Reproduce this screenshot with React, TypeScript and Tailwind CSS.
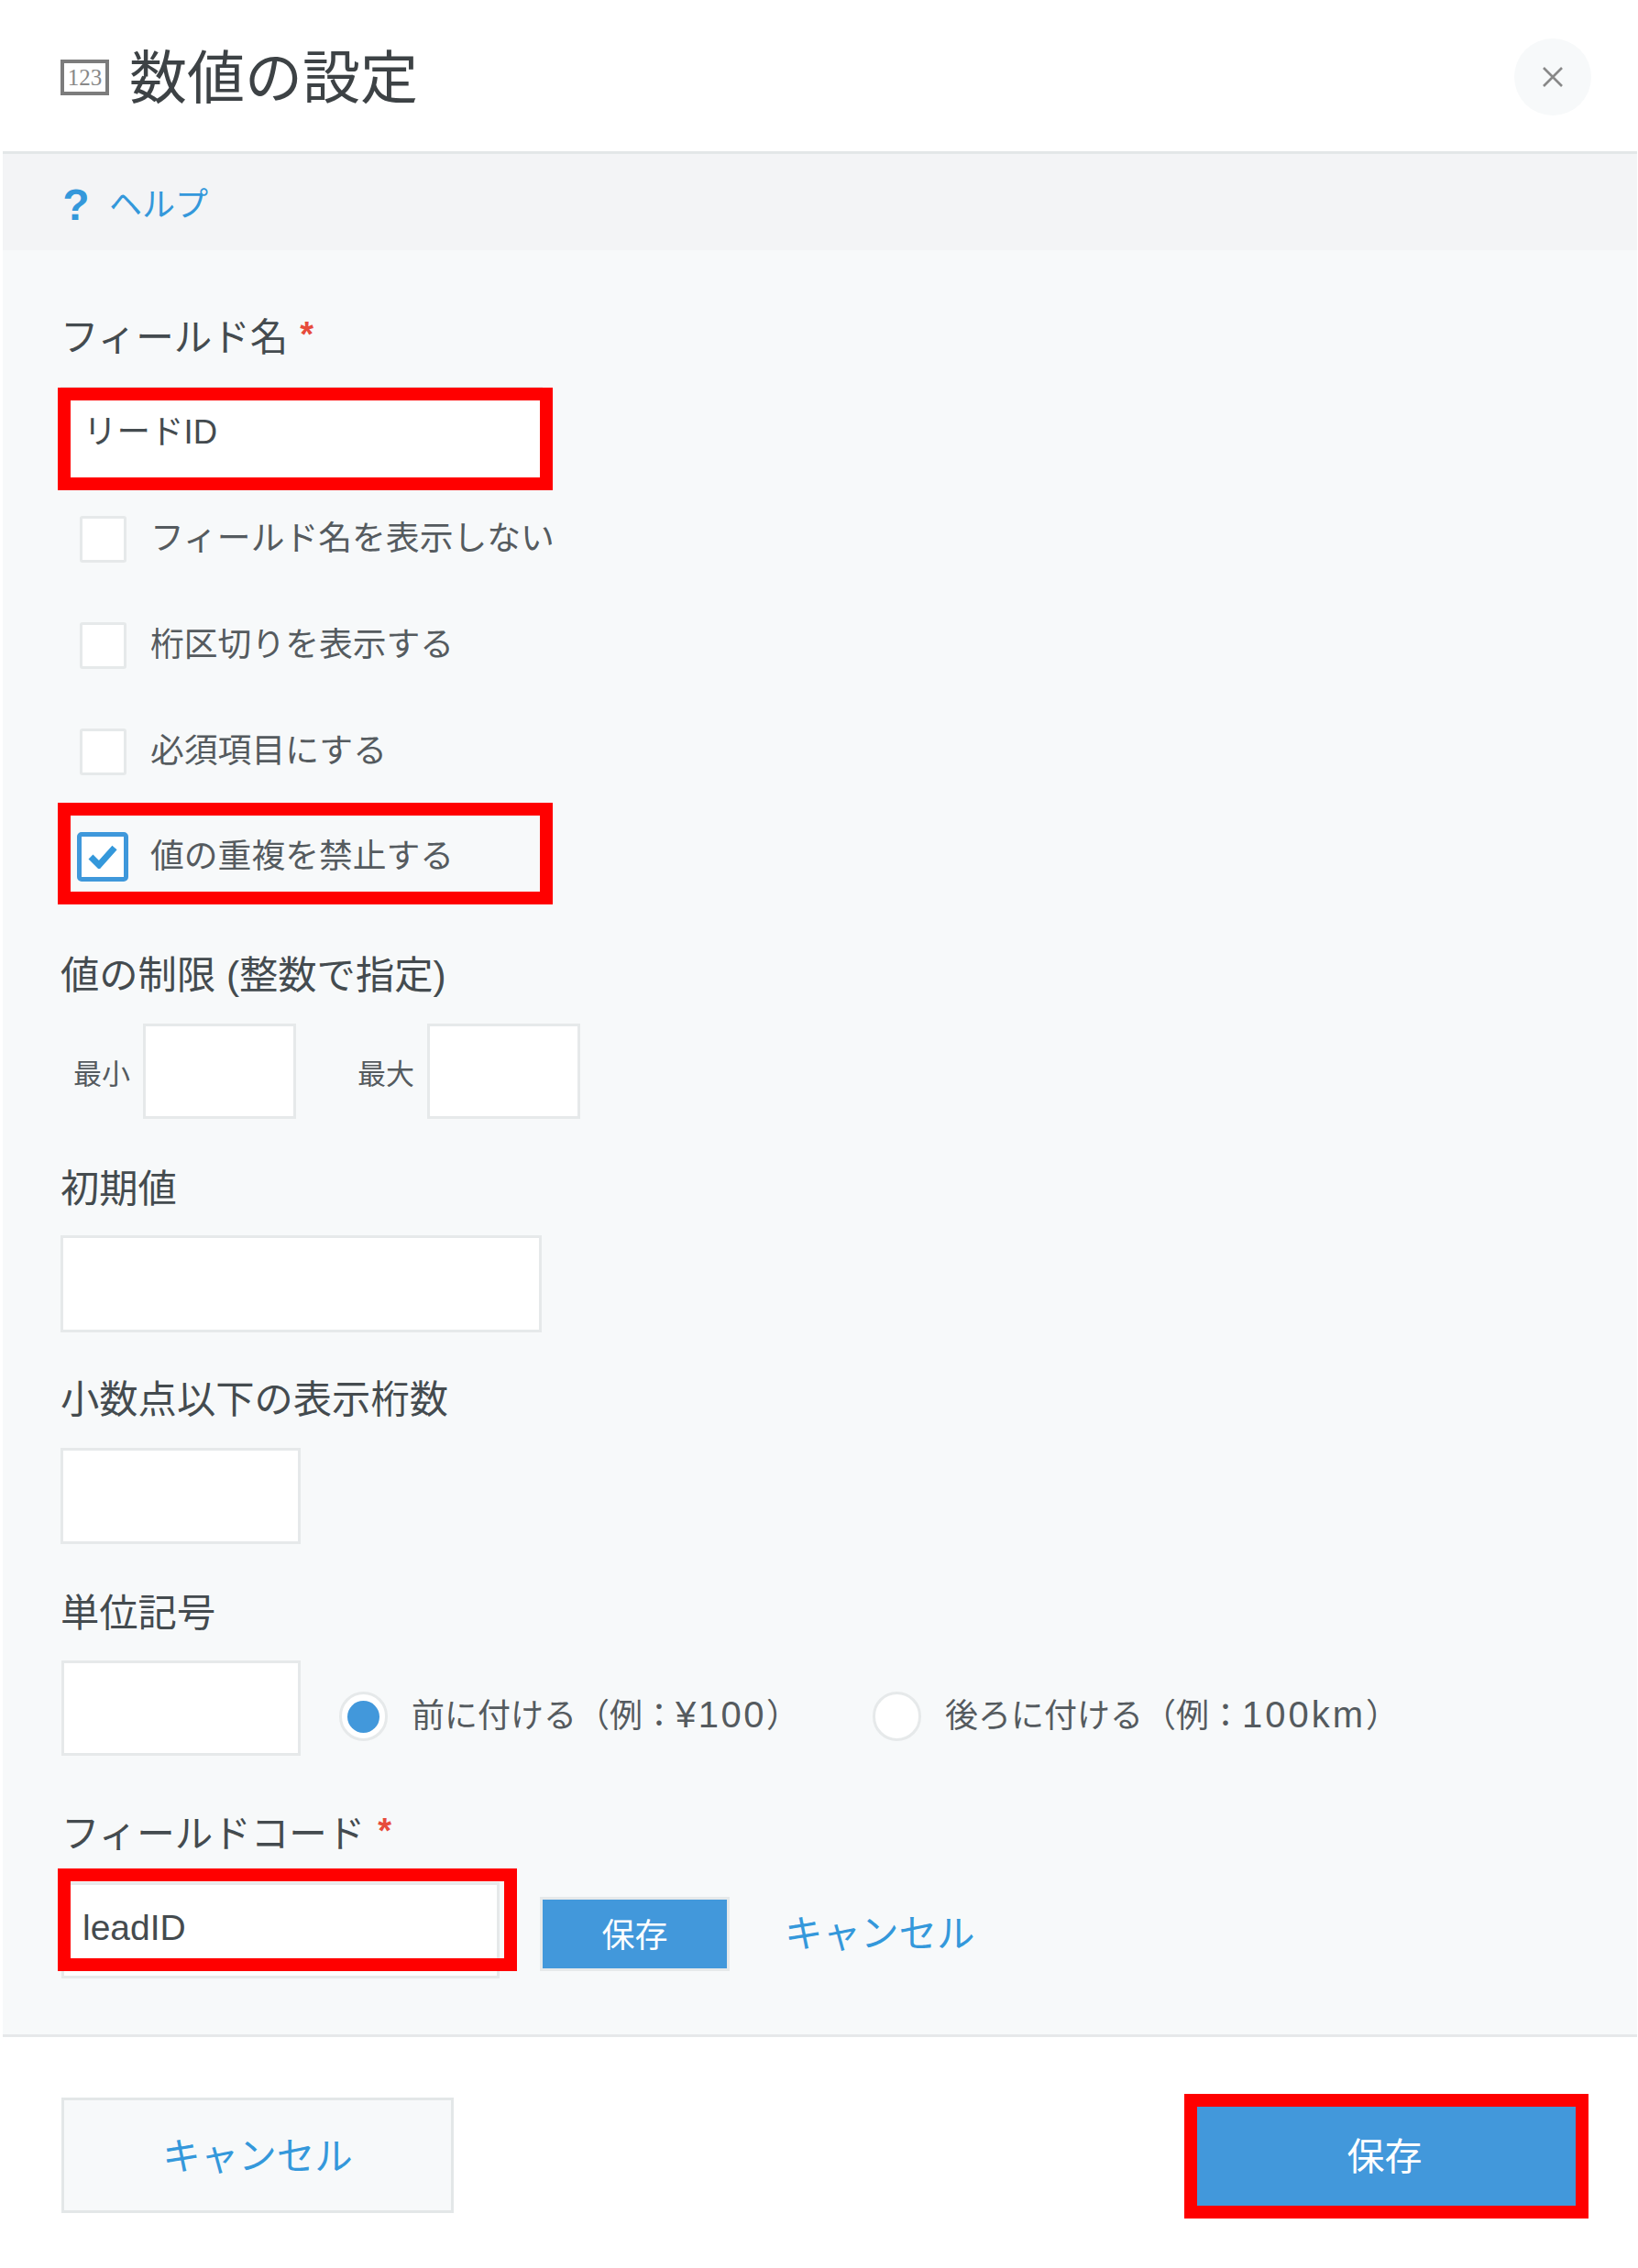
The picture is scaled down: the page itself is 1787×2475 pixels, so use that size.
const label = "h-[60px] flex items-center leading-[60px] text-[#444b4f]";
const field = "block bg-white border-[3px] border-[#e6e9ea] outline-none text-[#444b4f]";
const redBox = "absolute border-[14px] border-[#ff0000] pointer-events-none z-10";
const blue = "text-[#3498db]";

function Check({ text, first }: { text: string; first?: boolean }) {
  return (
    <div className={`flex items-center h-[56px] w-[526px] ${first ? "mt-[35px]" : "mt-[60px]"}`}>
      <span className="shrink-0 ml-[21px] w-[51px] h-[51px] bg-white border-[3px] border-[#e6e9ea] rounded-[3px]" />
      <span className="ml-[26px] text-[36.8px] leading-[56px] text-[#555b5f] whitespace-nowrap">{text}</span>
    </div>
  );
}

function Radio({ on, children }: { on?: boolean; children: React.ReactNode }) {
  return (
    <div className="flex items-center">
      <span className="shrink-0 w-[53px] h-[54px] rounded-full bg-white border-[3px] border-[#e6e9ea] flex items-center justify-center">
        {on && <span className="w-[35px] h-[35px] rounded-full bg-[#4298db]" />}
      </span>
      <span className="ml-[26px] text-[36px] leading-[50px] text-[#555b5f] whitespace-nowrap -mt-[2px]">{children}</span>
    </div>
  );
}

export default function App() {
  return (
    <div className="w-[1787px] h-[2475px] bg-white pl-[3px] pr-px overflow-hidden font-['Liberation_Sans','Noto_Sans_CJK_JP',sans-serif]">
      <header className="h-[165px] flex items-center pl-[63px] pr-[50px] pt-[3px]">
        <span className="w-[53px] h-[39px] border-[4px] border-[#7c7c7c] flex items-center justify-center font-['Liberation_Serif',serif] text-[25px] leading-none text-[#888888]">
          123
        </span>
        <h1 className="ml-[22px] mt-[2px] text-[63px] leading-[80px] font-normal text-[#3d4245]">数値の設定</h1>
        <button className="ml-auto w-[84px] h-[84px] rounded-full bg-[#f7f9fa] flex items-center justify-center">
          <svg width="24" height="24" viewBox="0 0 24 24" fill="none" stroke="#888888" strokeWidth="2.6">
            <path d="M2 2 L22 22 M22 2 L2 22" />
          </svg>
        </button>
      </header>

      <div className="h-[3px] bg-[#e3e7e8]" />

      <div className="h-[105px] bg-[#f3f4f6] flex items-center pl-[63px] pt-[6px]">
        <span className={`w-[34px] text-center font-bold text-[48px] leading-none ${blue}`}>?</span>
        <span className={`ml-[19px] text-[36px] leading-[50px] ${blue}`}>ヘルプ</span>
      </div>

      <main className="bg-[#f7f9fa] px-[63px] pt-[66px] pb-[61px]">
        <div className={`${label} text-[41.5px] gap-[13px]`}>
          フィールド名
          <span className="text-[#e74c3c] text-[38px] leading-none font-bold -mt-[8px]">*</span>
        </div>
        <div className="relative w-[526px] h-[103px] mt-[23px]">
          <input readOnly value="リードID" className={`${field} text-[36.5px] w-full h-full pl-[22px] pb-[10px]`} />
          <div className={`${redBox} -left-[3px] -right-[11px] top-[1px] -bottom-[10px]`} />
        </div>

        <Check first text="フィールド名を表示しない" />
        <Check text="桁区切りを表示する" />
        <Check text="必須項目にする" />
        <div className="relative flex items-center h-[56px] w-[526px] mt-[59px]">
          <span className="shrink-0 ml-[18px] w-[56px] h-[54px] bg-white border-[5px] border-[#3f98db] rounded-[5px] flex items-center justify-center">
            <svg width="32" height="26" viewBox="0 0 32 26" fill="none" stroke="#3498db" strokeWidth="7">
              <path d="M3 13 L12 22 L29 3" />
            </svg>
          </span>
          <span className="ml-[24px] text-[36.8px] leading-[56px] text-[#555b5f] whitespace-nowrap">値の重複を禁止する</span>
          <div className={`${redBox} -left-[3px] -right-[11px] -top-[31px] -bottom-[24px]`} />
        </div>

        <div className={`${label} text-[42.3px] mt-[72px]`}>値の制限 (整数で指定)</div>
        <div className="flex items-center mt-[22px]">
          <span className="ml-[14px] w-[62px] text-[31px] leading-[44px] text-[#555b5f] mt-[8px]">最小</span>
          <input readOnly className={`${field} ml-[14px] w-[167px] h-[104px]`} />
          <span className="ml-[67px] w-[62px] text-[31px] leading-[44px] text-[#555b5f] mt-[8px]">最大</span>
          <input readOnly className={`${field} ml-[14px] w-[167px] h-[104px]`} />
        </div>

        <div className={`${label} text-[42.3px] mt-[47px]`}>初期値</div>
        <input readOnly className={`${field} mt-[20px] w-[525px] h-[106px]`} />

        <div className={`${label} text-[42.3px] mt-[44px]`}>小数点以下の表示桁数</div>
        <input readOnly className={`${field} mt-[22px] w-[262px] h-[105px]`} />

        <div className={`${label} text-[42.3px] mt-[46px]`}>単位記号</div>
        <div className="flex items-start mt-[21px] ml-[1px]">
          <input readOnly className={`${field} w-[261px] h-[104px]`} />
          <div className="flex items-center mt-[34px] ml-[42px] gap-[80px]">
            <Radio on>
              前に付ける（例：<span className="text-[40px] tracking-[2.5px]">¥100</span>）
            </Radio>
            <Radio>
              後ろに付ける（例：<span className="text-[40px] tracking-[3px]">100km</span>）
            </Radio>
          </div>
        </div>

        <div className={`${label} text-[41.5px] mt-[56px] ml-[1px] gap-[14px]`}>
          フィールドコード
          <span className="text-[#e74c3c] text-[38px] leading-none font-bold -mt-[8px]">*</span>
        </div>
        <div className="flex items-start mt-[22px] ml-[1px]">
          <div className="relative w-[478px] h-[105px]">
            <input readOnly value="leadID" className={`${field} text-[39px] w-full h-full pl-[20px] pb-[6px]`} />
            <div className={`${redBox} -left-[4px] -right-[19px] -top-[15px] bottom-[8px]`} />
          </div>
          <div className="flex items-center mt-[16px] ml-[44px]">
            <button className="w-[207px] h-[81px] pt-[4px] bg-[#4298db] border-[3px] border-[#e6e9ea] text-white text-[36px] leading-none">保存</button>
            <a className={`ml-[60px] text-[41.5px] leading-[60px] ${blue}`}>キャンセル</a>
          </div>
        </div>
      </main>

      <div className="h-[3px] bg-[#e6e8ea]" />

      <footer className="flex items-start justify-between pt-[66px] pl-[64px] pr-[61px]">
        <button className={`w-[428px] h-[126px] pt-[5px] bg-[#f7f9fa] border-[3px] border-[#e3e7e8] text-[41.5px] ${blue}`}>キャンセル</button>
        <div className="relative w-[425px] h-[126px]">
          <button className="w-full h-full pt-[6px] pr-[4px] bg-[#4298db] text-white text-[41px]">保存</button>
          <div className={`${redBox} -left-[8px] -right-[8px] -top-[4px] -bottom-[6px]`} />
        </div>
      </footer>
    </div>
  );
}
